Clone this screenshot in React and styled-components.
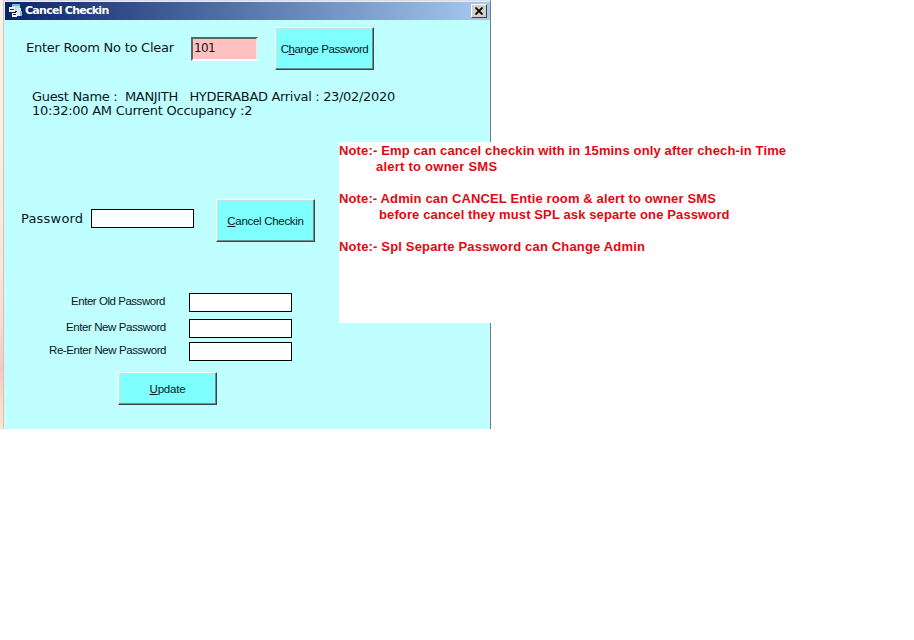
import React from "react";
import styled, { createGlobalStyle } from "styled-components";

const GlobalStyle = createGlobalStyle`
  html, body { margin: 0; background: #fff; }
  * { box-sizing: border-box; }
`;

const Page = styled.main`
  position: relative;
  width: 914px;
  height: 640px;
  overflow: hidden;
  background: #fff;
  display: flex;
  align-items: flex-start;
`;

const DesktopEdge = styled.div`
  width: 3px;
  height: 429px;
  background: linear-gradient(#fdf3e4 0%, #fdf0e2 30%, #fce6da 60%, #fadccf 75%, #f3c9bf 86%, #fbdcc8 94%, #fce4d0 100%);
`;

const Dialog = styled.section`
  width: 488px;
  height: 429px;
  background: #c0ffff;
  border-left: 1px solid #c4c6c4;
  border-right: 1px solid #6f8080;
  border-top: 1px solid #d6dbe6;
  box-shadow: inset 1px 1px #e6eef2;
`;

const TitleBar = styled.header`
  height: 18px;
  margin: 1px 0 0 1px;
  padding: 0 3px 0 4px;
  display: flex;
  align-items: center;
  background: linear-gradient(90deg, #0a246a, #a6caf0);
`;

const Title = styled.h1`
  margin: 0 auto 0 2px;
  font: bold 11px/18px "DejaVu Sans", sans-serif;
  letter-spacing: -0.73px;
  color: #fff;
  white-space: pre;
`;

const CloseButton = styled.button`
  width: 16px;
  height: 14px;
  padding: 0;
  display: flex;
  align-items: center;
  justify-content: center;
  background: #d4d0c8;
  border: 1px solid;
  border-color: #fff #404040 #404040 #fff;
`;

const Row = styled.div`
  display: flex;
  align-items: flex-start;
  height: ${(p) => p.$h}px;
  padding-left: ${(p) => p.$left || 0}px;
`;

const Label = styled.label`
  flex: none;
  width: ${(p) => p.$w}px;
  margin-top: ${(p) => p.$top || 0}px;
  font: 13px/16px "DejaVu Sans", sans-serif;
  letter-spacing: ${(p) => p.$spacing || 0}px;
  color: #06181c;
  white-space: pre;
`;

const SmallLabel = styled(Label)`
  font: 11.5px/16px "Liberation Sans", sans-serif;
`;

const RoomField = styled.input`
  width: 67px;
  height: 24px;
  margin: 17px 17px 0 0;
  padding: 0 0 2px 1px;
  font: 12px "DejaVu Sans", sans-serif;
  letter-spacing: -0.6px;
  color: #201010;
  background: #ffc0c0;
  border: 2px solid;
  border-color: #5c6464 #e2eeee #f4ffff #5c6464;
  border-radius: 0;
  outline: none;
`;

const PasswordField = styled.input`
  width: 103px;
  height: 19px;
  margin: ${(p) => p.$top}px 0 0;
  padding: 0 3px;
  background: #fff;
  border: 1px solid #000;
  border-radius: 0;
  outline: none;
`;

const PushButton = styled.button`
  flex: none;
  width: 99px;
  height: ${(p) => p.$h}px;
  margin: ${(p) => p.$top || 0}px 0 0 ${(p) => p.$left || 0}px;
  padding: 1px 0 0;
  font: 11.5px/16px "Liberation Sans", sans-serif;
  letter-spacing: ${(p) => p.$spacing}px;
  color: #06181c;
  background: #80ffff;
  border: 1px solid;
  border-color: #f4ffff #3c4848 #3c4848 #f4ffff;
  border-radius: 0;
  box-shadow: inset -1px -1px #6f8f90, inset 1px 1px #c4e4e4;
  u { text-underline-offset: 1px; text-decoration-thickness: 1px; }
`;

const GuestInfo = styled.p`
  margin: 19px 0 0 28px;
  height: 108px;
  font: 13px/14px "DejaVu Sans", sans-serif;
  color: #06181c;
  white-space: pre;
`;

const InfoLine = styled.span`
  display: block;
  letter-spacing: ${(p) => p.$spacing}px;
`;

const Notes = styled.aside`
  position: absolute;
  left: 339px;
  top: 142px;
  width: 470px;
  height: 181px;
  padding-top: 1px;
  background: #fff;
`;

const NoteLine = styled.p`
  margin: 0 0 ${(p) => (p.$last ? 16 : 0)}px;
  padding-left: ${(p) => p.$indent || 0}px;
  font: bold 13px/16px "Liberation Sans", sans-serif;
  letter-spacing: ${(p) => p.$spacing}px;
  color: #e40810;
  white-space: pre;
`;

function FormIcon() {
  return (
    <svg width="14" height="14" viewBox="0 0 14 14" shapeRendering="crispEdges">
      <path d="M3 0h8v7H3z" fill="#b4dcec" />
      <path d="M3 0h8v2H3z" fill="#78b8d4" />
      <path d="M0 3h6v5H0z" fill="#f4f4ee" />
      <path d="M1 5h4v1H1z" fill="#172c50" />
      <path d="M3 8h5v5H3z" fill="#fff" />
      <path d="M3 8h4v1H3zM4 10h3v1H4z" fill="#101c38" />
      <path d="M8 4h4v8H8z" fill="#dce8ee" />
      <path d="M11 7h2v5h-2z" fill="#9cb8cc" />
    </svg>
  );
}

function CloseIcon() {
  return (
    <svg width="8" height="8" viewBox="0 0 8 8">
      <path d="M0.5 0.5l7 7M7.5 0.5l-7 7" stroke="#000" strokeWidth="1.8" />
    </svg>
  );
}

export default function App() {
  return (
    <Page>
      <GlobalStyle />
      <DesktopEdge />
      <Dialog>
        <TitleBar>
          <FormIcon />
          <Title>Cancel Checkin</Title>
          <CloseButton aria-label="Close"><CloseIcon /></CloseButton>
        </TitleBar>
        <Row $h={51} $left={22}>
          <Label $w={165} $top={20} $spacing={-0.24}>Enter Room No to Clear</Label>
          <RoomField defaultValue="101" />
          <PushButton $h={43} $top={7} $spacing={-0.42}>C<u>h</u>ange Password</PushButton>
        </Row>
        <GuestInfo>
          <InfoLine $spacing={-0.32}>Guest Name :  MANJITH   HYDERABAD Arrival : 23/02/2020</InfoLine>
          <InfoLine $spacing={-0.26}>10:32:00 AM Current Occupancy :2</InfoLine>
        </GuestInfo>
        <Row $h={94} $left={17}>
          <Label $w={70} $top={13} $spacing={0.2}>Password</Label>
          <PasswordField type="password" $top={11} />
          <PushButton $h={43} $top={1} $left={22} $spacing={-0.3}><u>C</u>ancel Checkin</PushButton>
        </Row>
        <Row $h={26} $left={67}>
          <SmallLabel $w={118} $top={1} $spacing={-0.46}>Enter Old Password</SmallLabel>
          <PasswordField type="password" $top={1} />
        </Row>
        <Row $h={23} $left={62}>
          <SmallLabel $w={123} $top={1} $spacing={-0.42}>Enter New Password</SmallLabel>
          <PasswordField type="password" $top={1} />
        </Row>
        <Row $h={31} $left={45}>
          <SmallLabel $w={140} $top={1} $spacing={-0.42}>Re-Enter New Password</SmallLabel>
          <PasswordField type="password" $top={1} />
        </Row>
        <Row $h={34} $left={114}>
          <PushButton $h={33} $spacing={-0.2}><u>U</u>pdate</PushButton>
        </Row>
      </Dialog>
      <Notes>
        <NoteLine $spacing={0.14}>Note:- Emp can cancel checkin with in 15mins only after chech-in Time</NoteLine>
        <NoteLine $spacing={0.24} $indent={37} $last>alert to owner SMS</NoteLine>
        <NoteLine $spacing={0.13}>Note:- Admin can CANCEL Entie room &amp; alert to owner SMS</NoteLine>
        <NoteLine $spacing={0.12} $indent={40} $last>before cancel they must SPL ask separte one Password</NoteLine>
        <NoteLine $spacing={0.17}>Note:- Spl Separte Password can Change Admin</NoteLine>
      </Notes>
    </Page>
  );
}
